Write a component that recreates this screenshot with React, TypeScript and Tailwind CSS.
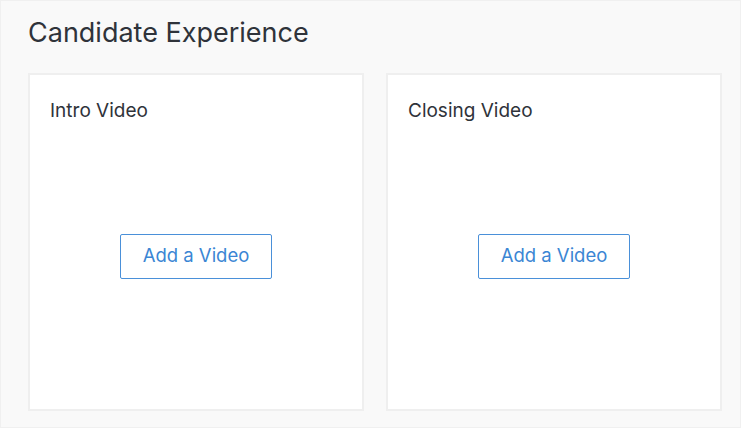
const cards = ["Intro Video", "Closing Video"];

function VideoCard({ title }: { title: string }) {
  return (
    <div className="flex h-[338px] w-[336px] shrink-0 flex-col border-2 border-[#efefef] bg-white">
      <h3 className="px-[20px] pt-[22px] text-[19px] leading-[28px] text-[#2f333a]">
        {title}
      </h3>
      <div className="flex flex-1 items-center justify-center pb-[22px]">
        <button className="h-[45px] w-[152px] rounded-[2px] border border-[#4a90d9] bg-white text-[18.5px] text-[#3b86d4]">
          Add a Video
        </button>
      </div>
    </div>
  );
}

export default function App() {
  return (
    <div className="bg-white font-['Inter',sans-serif]">
      <div className="h-[428px] w-[741px] border border-[#f0f0f0] bg-[#f9f9f9] pl-[27px] pr-[18px] pt-[14px]">
        <h2 className="text-[27px] leading-[36px] text-[#2f333a]">
          Candidate Experience
        </h2>
        <div className="mt-[22px] flex gap-[22px]">
          {cards.map((c) => (
            <VideoCard key={c} title={c} />
          ))}
        </div>
      </div>
    </div>
  );
}
